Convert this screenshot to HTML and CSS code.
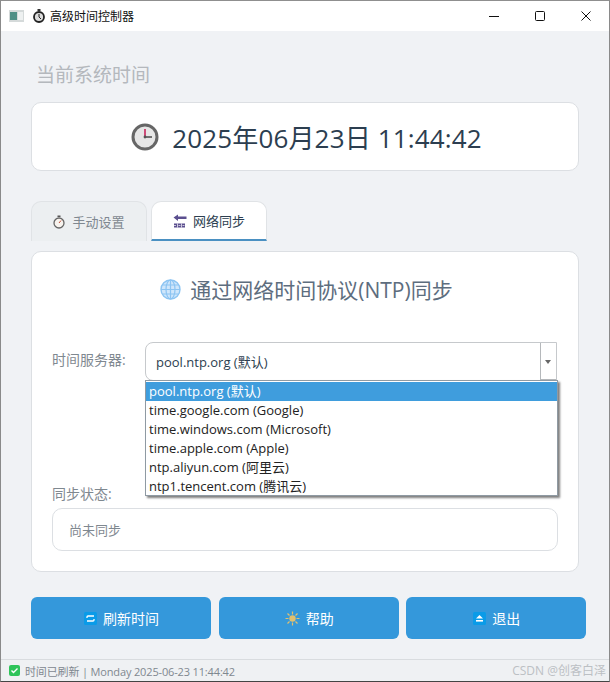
FILE: index.html
```html
<!DOCTYPE html>
<html>
<head>
    <title>高级时间控制器</title>
    <link rel="stylesheet" href="styles.css">
</head>
<body>
    <div class="window">
        <div class="titlebar">
            <svg class="thumb" width="15" height="12" viewBox="0 0 15 12"><rect x="0" y="0" width="15" height="12" fill="#d5dada"/><rect x="1" y="2" width="7" height="8" fill="#4f8f86"/><rect x="9" y="2" width="5" height="8" fill="#eef1f1"/></svg>
            <svg class="app-icon" width="12" height="14" viewBox="0 0 12 14"><rect x="4.5" y="0" width="3" height="2" fill="#333"/><circle cx="6" cy="8" r="5" fill="#ddd" stroke="#222" stroke-width="1.8"/><path d="M6 8V5M6 8l2 2" stroke="#222" stroke-width="1" fill="none"/></svg>
            <span class="app-title">高级时间控制器</span>
            <div class="win-buttons">
                <svg width="12" height="12" viewBox="0 0 12 12"><path d="M1 6.5h10" stroke="#111" stroke-width="1"/></svg>
                <svg width="12" height="12" viewBox="0 0 12 12"><rect x="1.5" y="1.5" width="9" height="9" rx="1" fill="none" stroke="#111" stroke-width="1"/></svg>
                <svg width="12" height="12" viewBox="0 0 12 12"><path d="M1.5 1.5l9 9M10.5 1.5l-9 9" stroke="#111" stroke-width="1"/></svg>
            </div>
        </div>

        <div class="main">
            <h2 class="section-title">当前系统时间</h2>
            <div class="time-card">
                <svg width="28" height="28" viewBox="0 0 28 28"><circle cx="14" cy="14" r="12" fill="#e6e6e6" stroke="#666" stroke-width="3"/><path d="M14 14V6" stroke="#c8245c" stroke-width="1.6"/><path d="M14 14h7" stroke="#222" stroke-width="1.2"/><circle cx="14" cy="14" r="1.4" fill="#555"/></svg>
                <span class="time-text">2025年06月23日 11:44:42</span>
            </div>

            <div class="tabs">
                <div class="tab">
                    <svg width="12" height="14" viewBox="0 0 12 14"><rect x="4.5" y="0.5" width="3" height="1.5" fill="#555"/><circle cx="6" cy="8" r="5" fill="#f7f3ee" stroke="#666" stroke-width="1.3"/><path d="M6 8l2-2.5" stroke="#c0533c" stroke-width="1"/></svg>
                    <span>手动设置</span>
                </div>
                <div class="tab tab-active">
                    <svg width="14" height="14" viewBox="0 0 14 14"><path d="M0.5 3.5L5 0.5v2h8.5v2.4H5v2z" fill="#5b4f8f"/><rect x="1" y="9.5" width="11" height="4" fill="#5b4f8f"/><path d="M4.5 9.5v4M8.5 9.5v4M1 11.5h2M5.5 11.5h2M9.5 11.5h2" stroke="#fff" stroke-width="0.7"/></svg>
                    <span>网络同步</span>
                </div>
            </div>

            <div class="panel">
                <div class="panel-title">
                    <svg width="21" height="21" viewBox="0 0 21 21"><circle cx="10.5" cy="10.5" r="9.5" fill="#cfe6fb" stroke="#8cc4f2" stroke-width="1.4"/><ellipse cx="10.5" cy="10.5" rx="4.5" ry="9.5" fill="none" stroke="#8cc4f2" stroke-width="1.2"/><path d="M1 10.5h19M2.5 6h16M2.5 15h16M10.5 1v19" stroke="#8cc4f2" stroke-width="1.2"/></svg>
                    <span>通过网络时间协议(NTP)同步</span>
                </div>

                <div class="server-row">
                    <label class="field-label">时间服务器:</label>
                    <div class="combo">
                        <span class="combo-value">pool.ntp.org (默认)</span>
                        <span class="combo-arrow"></span>
                    </div>
                </div>

                <ul class="combo-list">
                    <li class="selected">pool.ntp.org (默认)</li>
                    <li>time.google.com (Google)</li>
                    <li>time.windows.com (Microsoft)</li>
                    <li>time.apple.com (Apple)</li>
                    <li>ntp.aliyun.com (阿里云)</li>
                    <li>ntp1.tencent.com (腾讯云)</li>
                </ul>

                <label class="field-label status-label">同步状态:</label>
                <div class="status-box">尚未同步</div>
            </div>

            <div class="button-row">
                <button>
                    <svg width="13" height="13" viewBox="0 0 13 13"><rect width="13" height="13" rx="1.5" fill="#0a9be8"/><path d="M3 6V5q0-1 1-1h6M10 7v1q0 1-1 1H3" stroke="#fff" stroke-width="1.3" fill="none"/></svg>
                    <span>刷新时间</span>
                </button>
                <button>
                    <svg width="15" height="15" viewBox="0 0 15 15"><circle cx="7.5" cy="7.5" r="3.2" fill="#e0c070"/><path d="M7.5 0.5v3M7.5 11.5v3M0.5 7.5h3M11.5 7.5h3M2.5 2.5l2 2M10.5 10.5l2 2M12.5 2.5l-2 2M4.5 10.5l-2 2" stroke="#e0c070" stroke-width="1.2"/></svg>
                    <span>帮助</span>
                </button>
                <button>
                    <svg width="13" height="13" viewBox="0 0 13 13"><rect width="13" height="13" rx="1.5" fill="#0a9be8"/><path d="M6.5 3l3.5 3.5H3z" fill="#fff"/><rect x="3" y="8" width="7" height="1.6" fill="#fff"/></svg>
                    <span>退出</span>
                </button>
            </div>
        </div>

        <div class="statusbar">
            <svg width="11" height="11" viewBox="0 0 11 11"><rect width="11" height="11" rx="2" fill="#2fc45a"/><path d="M2.5 5.5l2 2 4-4" stroke="#fff" stroke-width="1.4" fill="none"/></svg>
            <span class="status-text">时间已刷新 | Monday 2025-06-23 11:44:42</span>
            <span class="watermark">CSDN @创客白泽</span>
        </div>
    </div>
</body>
</html>
```

FILE: styles.css
```css
* { box-sizing: border-box; }
html, body { margin: 0; padding: 0; }
body { font-family: "Open Sans", "Noto Sans CJK SC", sans-serif; background-color: #f0f2f5; color: #2c3e50; }

.window { width: 610px; height: 682px; display: flex; flex-direction: column; background-color: #f0f2f5; border: 1px solid #8a8a8a; border-top-color: #8f8f8f; border-bottom-color: #444; }

.titlebar { height: 30px; flex: none; display: flex; align-items: center; background: #fff; padding-left: 8px; }
.thumb { margin-right: 9px; }
.app-icon { margin-right: 5px; }
.app-title { font-size: 12px; color: #111; }
.win-buttons { margin-left: auto; display: flex; gap: 34px; padding-right: 17px; }

.main { flex: 1; padding: 0 20px 0 30px; display: flex; flex-direction: column; }
.section-title { margin: 31px 0 0 5px; height: 40px; line-height: 26px; font-size: 19px; font-weight: normal; color: #b4b8bd; }

.time-card { width: 548px; height: 69px; padding-left: 3px; display: flex; align-items: center; justify-content: center; gap: 13px; background: #fff; border: 1px solid #dcdfe3; border-radius: 10px; }
.time-text { font-size: 26px; letter-spacing: 0.15px; color: #2c3e50; }

.tabs { display: flex; gap: 4px; margin-top: 30px; height: 40px; }
.tab { width: 116px; height: 40px; display: flex; align-items: center; justify-content: center; gap: 7px; font-size: 13px; color: #7f8890; background: #eceff1; border: 1px solid #e0e3e6; border-bottom: none; border-radius: 10px 10px 0 0; }
.tab-active { gap: 6px; color: #2c3e50; background: #fff; border-bottom: 2px solid #4a90c2; }

.panel { position: relative; width: 548px; height: 321px; margin-top: 10px; background: #fff; border: 1px solid #dcdfe3; border-radius: 10px; }
.panel-title { display: flex; align-items: center; justify-content: center; gap: 9px; margin-top: 23px; padding-left: 3px; height: 28px; font-size: 21px; color: #5d6d7e; }

.field-label { font-size: 14px; color: #7f8890; }
.server-row { display: flex; align-items: flex-start; margin: 39px 21px 0 20px; }
.server-row .field-label { width: 93px; padding-top: 7px; }
.combo { position: relative; flex: 1; height: 39px; display: flex; align-items: center; padding-left: 10px; font-size: 13px; color: #2c3e50; border: 1px solid #c6c9cc; border-radius: 8px 0 0 8px; }
.combo-arrow { position: absolute; right: 0; top: 0; width: 16px; height: 37px; border-left: 1px solid #b5b8bb; border-bottom: 1px solid #b5b8bb; }
.combo-arrow::after { content: ""; position: absolute; left: 4px; top: 17px; border: 3px solid transparent; border-top: 4px solid #666; }

.combo-list { position: absolute; left: 113px; top: 128px; width: 413px; height: 116px; margin: 0; padding: 1px 0 0; list-style: none; background: #fff; border: 1px solid #8f9aa3; box-shadow: 2px 2px 2px rgba(0, 0, 0, 0.5); z-index: 2; }
.combo-list li { height: 19px; line-height: 19px; padding-left: 3px; font-size: 13px; color: #222; }
.combo-list li.selected { background: #3f9ddd; color: #fff; }

.status-label { display: block; margin: 104px 0 0 20px; height: 20px; line-height: 18px; }
.status-box { width: 506px; height: 43px; margin: 3px 0 0 20px; padding-left: 16px; display: flex; align-items: center; font-size: 13px; color: #7f8890; border: 1px solid #dcdfe3; border-radius: 10px; }

.button-row { display: flex; gap: 7.67px; margin-top: 25px; }
button { width: 180px; height: 42px; padding: 0 0 0 1px; display: flex; align-items: center; justify-content: center; gap: 6px; font-family: inherit; font-size: 14px; color: #fff; background-color: #3498db; border: none; border-radius: 6px; }

.statusbar { position: relative; height: 22px; flex: none; margin-top: auto; display: flex; align-items: center; gap: 5px; padding-left: 8px; font-size: 11px; color: #7f8890; background: #eff1f3; border-top: 1px solid #d9dcdf; }
.status-text { letter-spacing: -0.15px; }
.watermark { position: absolute; right: 3px; top: 1px; font-size: 12px; color: #bcc0c4; }
```
